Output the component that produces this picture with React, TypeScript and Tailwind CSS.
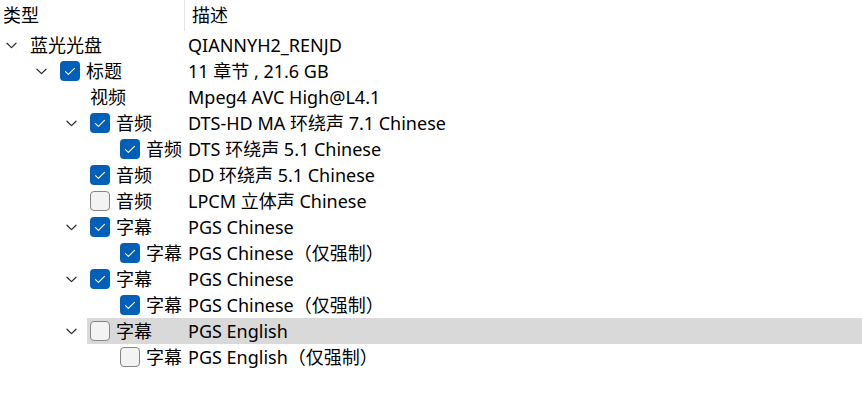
import React from 'react';

type Row = {
  level: number;
  expander?: boolean;
  check?: boolean;
  type: string;
  desc: string;
  selected?: boolean;
};

const rows: Row[] = [
  { level: 0, expander: true, type: '蓝光光盘', desc: 'QIANNYH2_RENJD' },
  { level: 1, expander: true, check: true, type: '标题', desc: '11 章节 , 21.6 GB' },
  { level: 2, type: '视频', desc: 'Mpeg4 AVC High@L4.1' },
  { level: 2, expander: true, check: true, type: '音频', desc: 'DTS-HD MA 环绕声 7.1 Chinese' },
  { level: 3, check: true, type: '音频', desc: 'DTS 环绕声 5.1 Chinese' },
  { level: 2, check: true, type: '音频', desc: 'DD 环绕声 5.1 Chinese' },
  { level: 2, check: false, type: '音频', desc: 'LPCM 立体声 Chinese' },
  { level: 2, expander: true, check: true, type: '字幕', desc: 'PGS Chinese' },
  { level: 3, check: true, type: '字幕', desc: 'PGS Chinese（仅强制）' },
  { level: 2, expander: true, check: true, type: '字幕', desc: 'PGS Chinese' },
  { level: 3, check: true, type: '字幕', desc: 'PGS Chinese（仅强制）' },
  { level: 2, expander: true, check: false, type: '字幕', desc: 'PGS English', selected: true },
  { level: 3, check: false, type: '字幕', desc: 'PGS English（仅强制）' },
];

function Chevron() {
  return (
    <svg width="11" height="7" viewBox="0 0 11 7" fill="none">
      <path d="M1 1.2 L5.5 5.6 L10 1.2" stroke="#2b2b2b" strokeWidth="1.2" strokeLinecap="round" strokeLinejoin="round" />
    </svg>
  );
}

function CheckBox({ checked }: { checked: boolean }) {
  if (checked) {
    return (
      <span className="flex h-[20px] w-[20px] shrink-0 items-center justify-center rounded-[4px] bg-[#005fb8]">
        <svg width="12" height="9" viewBox="0 0 12 9" fill="none">
          <path d="M1.5 4.6 L4.4 7.4 L10.5 1.4" stroke="#ffffff" strokeWidth="1.1" strokeLinecap="round" strokeLinejoin="round" />
        </svg>
      </span>
    );
  }
  return <span className="h-[20px] w-[20px] shrink-0 rounded-[4px] border border-[#868686] bg-[#f3f3f3]" />;
}

function TreeRow({ row }: { row: Row }) {
  const start = row.level * 30 + 27;
  return (
    <div className="flex h-[26px] items-stretch">
      <div className="flex shrink-0 items-center" style={{ width: start, paddingLeft: row.level * 30 }}>
        <span className="flex w-[22px] items-center justify-center">{row.expander && <Chevron />}</span>
      </div>
      <div className={`flex flex-1 items-center ${row.selected ? 'bg-[#d9d9d9]' : ''}`}>
        <div className="flex shrink-0 items-center gap-[6px] pl-[3px]" style={{ width: 188 - start }}>
          {row.check !== undefined && <CheckBox checked={row.check} />}
          <span className="whitespace-nowrap">{row.type}</span>
        </div>
        <span className="whitespace-nowrap">{row.desc}</span>
      </div>
    </div>
  );
}

export default function App() {
  return (
    <div className="h-[405px] w-[862px] overflow-hidden bg-white text-[18px] leading-[26px] text-black [font-family:'Noto_Sans','Noto_Sans_CJK_SC',sans-serif]">
      <div className="flex h-[32px]">
        <div className="flex w-[184px] items-center pl-[3px] pb-[2px]">类型</div>
        <div className="h-[31px] w-px bg-[#e5e5e5]" />
        <div className="flex items-center pl-[7px] pb-[2px]">描述</div>
      </div>
      {rows.map((r, i) => (
        <TreeRow key={i} row={r} />
      ))}
    </div>
  );
}
